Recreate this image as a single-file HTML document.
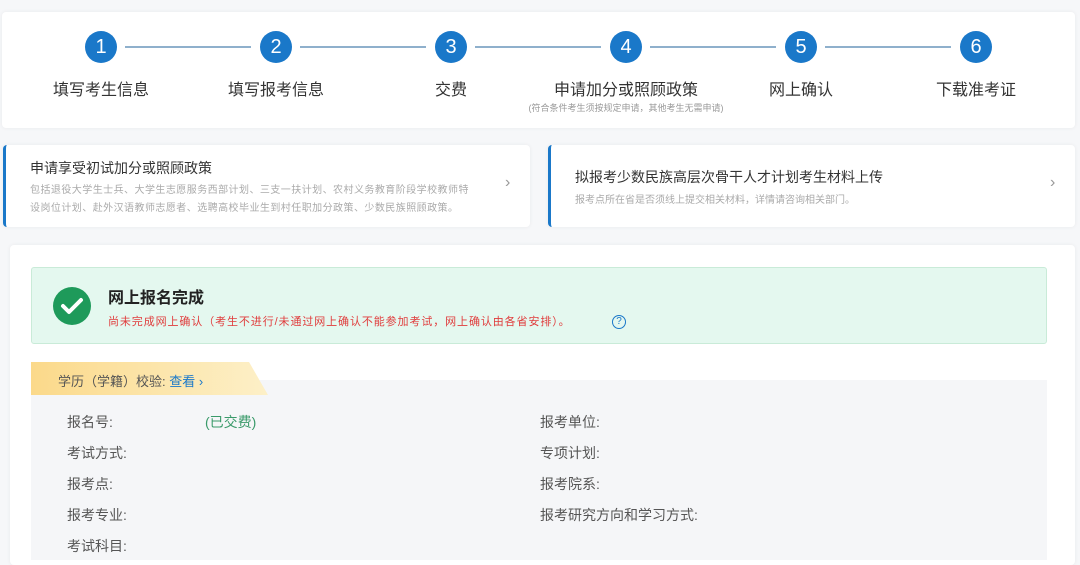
<!DOCTYPE html>
<html><head><meta charset="utf-8"><style>
*{margin:0;padding:0;box-sizing:border-box}
body{width:1080px;height:551px;overflow:hidden;background:#f6f7f9;font-family:"Liberation Sans","Noto Sans CJK SC",sans-serif;position:relative}
.abs{position:absolute}
.card{position:absolute;background:#fff;border-radius:4px;box-shadow:0 0 4px rgba(0,0,0,.06)}
.c{position:absolute;width:32px;height:32px;border-radius:50%;background:#1a78c9;color:#fff;font-size:20px;text-align:center;line-height:32px;top:31px}
.ln{position:absolute;top:46px;height:2px;background:#8fb0cc}
.lb{position:absolute;top:76px;width:200px;text-align:center;font-size:16px;color:#333}
.row{position:absolute;font-size:14px;color:#555}
</style></head><body>
<div class="card" style="left:2px;top:12px;width:1073px;height:116px"></div>
<div class="c" style="left:85px">1</div><div class="c" style="left:260px">2</div><div class="c" style="left:435px">3</div><div class="c" style="left:610px">4</div><div class="c" style="left:785px">5</div><div class="c" style="left:960px">6</div>
<div class="ln" style="left:125px;width:126px"></div><div class="ln" style="left:300px;width:126px"></div><div class="ln" style="left:475px;width:126px"></div><div class="ln" style="left:650px;width:126px"></div><div class="ln" style="left:825px;width:126px"></div>
<div class="lb" style="left:1px">填写考生信息</div><div class="lb" style="left:176px">填写报考信息</div><div class="lb" style="left:351px">交费</div><div class="lb" style="left:526px">申请加分或照顾政策</div><div class="lb" style="left:701px">网上确认</div><div class="lb" style="left:876px">下载准考证</div>
<div class="abs" style="left:476px;top:101px;width:300px;text-align:center;font-size:9px;color:#999">(符合条件考生须按规定申请，其他考生无需申请)</div>

<div class="card" style="left:3px;top:145px;width:527px;height:82px;border-left:3px solid #1a78c9"></div>
<div class="abs" style="left:30px;top:158px;font-size:14px;color:#333">申请享受初试加分或照顾政策</div>
<div class="abs" style="left:30px;top:182px;width:480px;font-size:10px;letter-spacing:0.45px;line-height:18px;color:#aaa">包括退役大学生士兵、大学生志愿服务西部计划、三支一扶计划、农村义务教育阶段学校教师特<br>设岗位计划、赴外汉语教师志愿者、选聘高校毕业生到村任职加分政策、少数民族照顾政策。</div>
<div class="abs" style="left:505px;top:174px;font-size:16px;color:#999">›</div>
<div class="card" style="left:548px;top:145px;width:527px;height:82px;border-left:3px solid #1a78c9"></div>
<div class="abs" style="left:575px;top:167px;font-size:14px;color:#333">拟报考少数民族高层次骨干人才计划考生材料上传</div>
<div class="abs" style="left:575px;top:191px;font-size:10px;color:#aaa">报考点所在省是否须线上提交相关材料，详情请咨询相关部门。</div>
<div class="abs" style="left:1050px;top:174px;font-size:16px;color:#999">›</div>

<div class="card" style="left:10px;top:245px;width:1065px;height:320px"></div>
<div class="abs" style="left:31px;top:267px;width:1016px;height:77px;background:#e4f8ef;border:1px solid #c9ebd8;border-radius:3px"></div>
<svg class="abs" style="left:52px;top:286px" width="40" height="40"><circle cx="20" cy="20" r="19" fill="#1e9a5a"/><path d="M11 20l6 6 12-12" stroke="#fff" stroke-width="4" fill="none" stroke-linecap="round" stroke-linejoin="round"/></svg>
<div class="abs" style="left:108px;top:284px;font-size:16px;font-weight:bold;color:#222">网上报名完成</div>
<div class="abs" style="left:108px;top:313px;font-size:11px;letter-spacing:0.9px;color:#e03c3c">尚未完成网上确认（考生不进行/未通过网上确认不能参加考试，网上确认由各省安排）。</div>
<div class="abs" style="left:612px;top:315px;width:14px;height:14px;border:1px solid #1a78c9;border-radius:50%;font-size:10px;line-height:12px;text-align:center;color:#1a78c9">?</div>
<div class="abs" style="left:31px;top:380px;width:1016px;height:180px;background:#f5f6f8"></div>
<div class="abs" style="left:31px;top:362px;width:237px;height:33px;background:linear-gradient(90deg,#fbd98a,#fdf0c8);clip-path:polygon(0 0,92% 0,100% 100%,0 100%)"></div>
<div class="abs" style="left:58px;top:371px;font-size:13px;color:#555">学历（学籍）校验: <span style="color:#1a78c9">查看 ›</span></div>
<div class="row" style="left:67px;top:412px">报名号:</div><div class="row" style="left:205px;top:412px;color:#3a9a6a">(已交费)</div>
<div class="row" style="left:67px;top:443px">考试方式:</div>
<div class="row" style="left:67px;top:474px">报考点:</div>
<div class="row" style="left:67px;top:505px">报考专业:</div>
<div class="row" style="left:67px;top:536px">考试科目:</div>
<div class="row" style="left:540px;top:412px">报考单位:</div>
<div class="row" style="left:540px;top:443px">专项计划:</div>
<div class="row" style="left:540px;top:474px">报考院系:</div>
<div class="row" style="left:540px;top:505px">报考研究方向和学习方式:</div>
</body></html>
